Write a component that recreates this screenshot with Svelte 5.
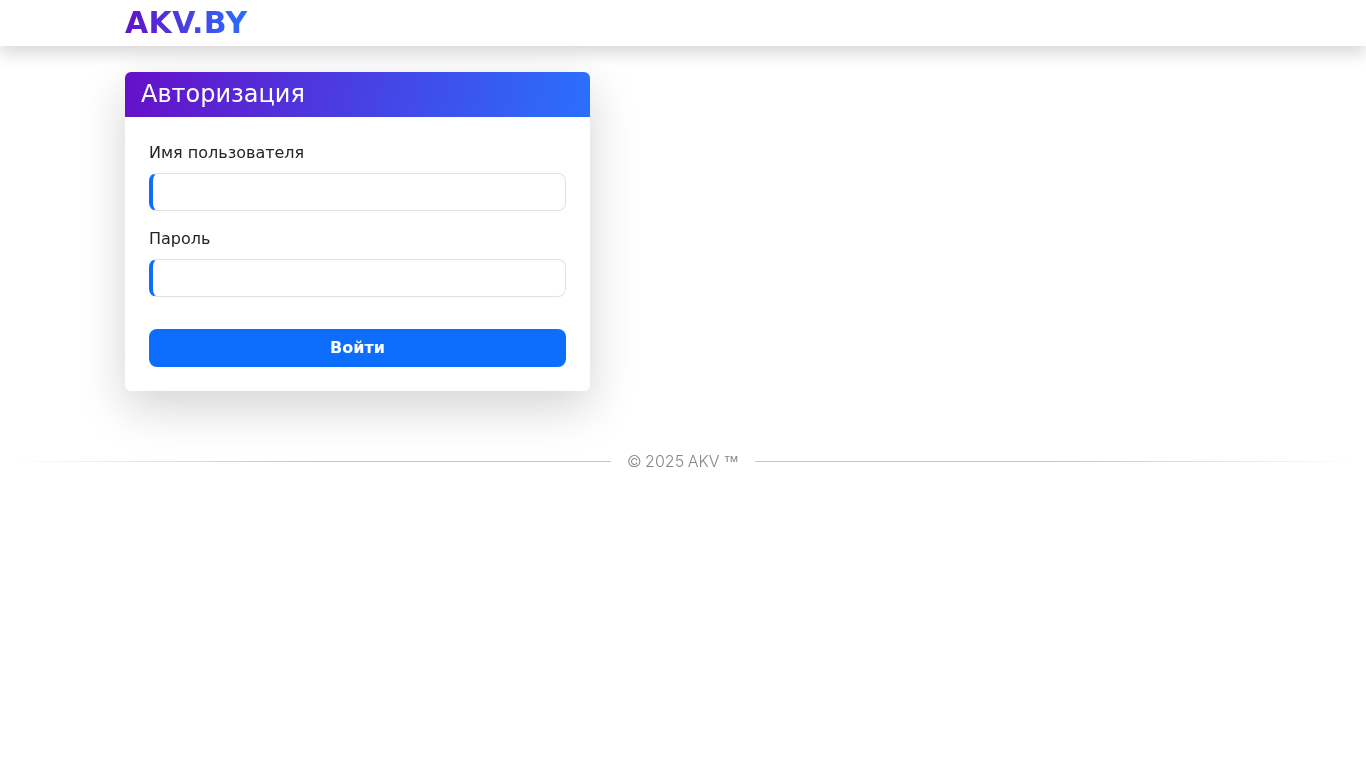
<script>
  let username = $state("");
  let password = $state("");
</script>

<div class="page">
  <header class="topbar">
    <div class="container">
      <a class="logo" href="#top">AKV.BY</a>
    </div>
  </header>

  <main class="container content">
    <section class="card">
      <h1 class="card-header">Авторизация</h1>
      <form class="card-body" onsubmit={(e) => e.preventDefault()}>
        <div class="field">
          <label for="username">Имя пользователя</label>
          <input id="username" type="text" bind:value={username} />
        </div>
        <div class="field">
          <label for="password">Пароль</label>
          <input id="password" type="password" bind:value={password} />
        </div>
        <button type="submit">Войти</button>
      </form>
    </section>
  </main>

  <footer class="footer">
    <span class="line left"></span>
    <span class="copy">© 2025 AKV <span class="tm">™</span></span>
    <span class="line right"></span>
  </footer>
</div>

<style>
  :global(body) {
    margin: 0;
    background: #fff;
    color: #212529;
    font-family: "DejaVu Sans", sans-serif;
    font-size: 16px;
    line-height: 1.5;
  }

  .page {
    will-change: transform;
  }

  .container {
    width: 1116px;
    margin: 0 auto;
  }

  .topbar {
    height: 46px;
    background: #fff;
    box-shadow: 0 8px 16px rgba(0, 0, 0, 0.15);
  }

  .logo {
    display: inline-block;
    font-size: 30px;
    font-weight: 700;
    line-height: 46px;
    letter-spacing: 0.4px;
    text-decoration: none;
    background: linear-gradient(90deg, #6610c8, #2a6ffd);
    -webkit-background-clip: text;
    background-clip: text;
    color: transparent;
  }

  .content {
    padding-top: 26px;
  }

  .card {
    width: 465px;
    background: #fff;
    border-radius: 6px;
    box-shadow: 0 16px 48px rgba(0, 0, 0, 0.175);
  }

  .card-header {
    margin: 0;
    height: 45px;
    padding: 0 16px;
    box-sizing: border-box;
    border-radius: 6px 6px 0 0;
    background: linear-gradient(100deg, #6610c8, #2a6ffd);
    color: #fff;
    font-size: 24px;
    font-weight: 400;
    line-height: 45px;
  }

  .card-body {
    padding: 24px;
  }

  .field {
    margin-bottom: 16px;
  }

  label {
    display: block;
    margin-bottom: 8px;
  }

  input {
    display: block;
    width: 100%;
    height: 38px;
    box-sizing: border-box;
    padding: 6px 12px;
    border: 1px solid #dee2e6;
    border-left: 4px solid #0d6efd;
    border-radius: 8px;
    background: #fff;
    font: inherit;
    outline: none;
  }

  button {
    display: block;
    width: 100%;
    height: 38px;
    margin-top: 32px;
    border: none;
    border-radius: 8px;
    background: #0d6efd;
    color: #fff;
    font: inherit;
    font-weight: 700;
  }

  .footer {
    display: flex;
    align-items: center;
    gap: 16px;
    margin-top: 58px;
    padding: 0 10px;
    color: #888;
    font-family: Inter, sans-serif;
    font-size: 16px;
    font-weight: 300;
    line-height: 24px;
  }

  .copy {
    white-space: nowrap;
    word-spacing: -1px;
  }

  .tm {
    font-family: "DejaVu Sans", sans-serif;
    font-weight: 200;
    line-height: 0;
  }

  .line {
    flex: 1;
    height: 1px;
  }

  .line.left {
    background: linear-gradient(90deg, transparent, #c4c4c4 50%);
  }

  .line.right {
    background: linear-gradient(90deg, #c4c4c4 50%, transparent);
  }
</style>
